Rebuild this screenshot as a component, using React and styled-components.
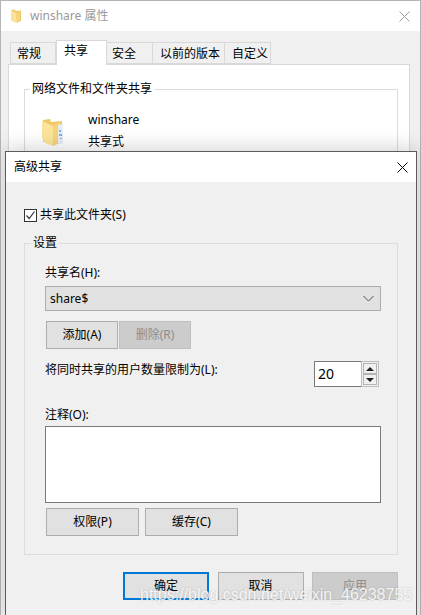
import React from "react";
import styled, { createGlobalStyle } from "styled-components";

const Global = createGlobalStyle`
  html, body { margin: 0; padding: 0; background: #f0f0f0; }
  * { box-sizing: border-box; }
`;

const font = `"Noto Sans", "Noto Sans CJK SC", sans-serif`;

const Desktop = styled.div`
  position: relative;
  width: 421px;
  height: 615px;
  overflow: hidden;
  background: #f0f0f0;
  font-family: ${font};
  font-size: 12px;
  color: #000;
`;

const BackWindow = styled.div`
  width: 421px;
  height: 615px;
  border: 1px solid #b5b5b5;
  border-bottom: 0;
  background: #f0f0f0;
  display: flex;
  flex-direction: column;
`;

const TitleBar = styled.div`
  display: flex;
  align-items: center;
  height: ${(p) => p.$h}px;
  flex: none;
  padding: 0 ${(p) => p.$pr}px 0 ${(p) => p.$pl}px;
  background: #fff;
  gap: ${(p) => p.$gap || 6}px;
  color: ${(p) => (p.$dim ? "#9a9a9a" : "#000")};
`;

const TitleText = styled.span`
  flex: 1;
  line-height: 16px;
`;

const TabStrip = styled.div`
  display: flex;
  align-items: flex-end;
  height: 33px;
  padding: 0 0 0 9px;
  flex: none;
`;

const Tab = styled.div`
  width: ${(p) => p.$w}px;
  height: ${(p) => (p.$active ? 25 : 22)}px;
  margin-bottom: ${(p) => (p.$active ? -1 : 0)}px;
  border: 1px solid #d9d9d9;
  border-bottom: ${(p) => (p.$active ? "0" : "1px solid #d9d9d9")};
  border-left-width: ${(p) => (p.$first || p.$active ? 1 : 0)}px;
  background: ${(p) => (p.$active ? "#fff" : "#f0f0f0")};
  display: flex;
  align-items: center;
  line-height: 16px;
  position: relative;
  z-index: ${(p) => (p.$active ? 1 : 0)};
  padding: ${(p) => (p.$active ? "0 0 4px 7px" : `1px 0 0 ${p.$pl}px`)};
`;

const TabPanel = styled.div`
  margin: 0 10px 0 7px;
  flex: 1;
  background: #fff;
  border: 1px solid #d9d9d9;
  padding: 16px 11px 0 15px;
`;

const Group = styled.fieldset`
  margin: 0;
  padding: 0;
  height: ${(p) => p.$h}px;
  border: 1px solid #dcdcdc;
  min-width: 0;
`;

const GroupInner = styled.div`
  padding: ${(p) => p.$pad};
`;

const Legend = styled.legend`
  padding: 0 2px;
  margin-left: ${(p) => p.$ml}px;
  line-height: 16px;
  font-size: 12px;
`;

const ShareRow = styled.div`
  display: flex;
  gap: 24px;
`;

const FolderSlot = styled.div`
  padding-top: 6px;
  flex: none;
`;

const FileMeta = styled.div`
  display: flex;
  flex-direction: column;
  gap: 6px;
  line-height: 16px;
`;

const Dialog = styled.div`
  position: absolute;
  left: 5px;
  top: 151px;
  width: 412px;
  height: 470px;
  background: #f0f0f0;
  border: 1px solid #5b5b5b;
  box-shadow: 0 -4px 18px rgba(0, 0, 0, 0.16);
  display: flex;
  flex-direction: column;
`;

const DialogBody = styled.div`
  padding: 26px 18px 0 18px;
  display: flex;
  flex-direction: column;
`;

const CheckRow = styled.label`
  display: flex;
  align-items: center;
  gap: 3px;
  height: 14px;
  margin-bottom: 13px;
  line-height: 14px;
`;

const CheckBox = styled.span`
  width: 13px;
  height: 13px;
  border: 1px solid #333;
  background: #fff;
  display: flex;
  align-items: center;
  justify-content: center;
`;

const FieldLabel = styled.div`
  height: ${(p) => p.$h}px;
  line-height: 16px;
`;

const Select = styled.div`
  width: 336px;
  height: 25px;
  background: #e1e1e1;
  border: 1px solid #adadad;
  display: flex;
  align-items: center;
  justify-content: space-between;
  padding: 0 6px 0 4px;
  margin-bottom: 10px;
`;

const ButtonRow = styled.div`
  display: flex;
  gap: ${(p) => p.$gap}px;
  padding-left: ${(p) => p.$pl || 0}px;
  justify-content: ${(p) => (p.$end ? "flex-end" : "flex-start")};
`;

const Button = styled.div`
  width: ${(p) => p.$w}px;
  height: 28px;
  display: flex;
  align-items: center;
  justify-content: center;
  line-height: 16px;
  background: ${(p) => (p.$disabled ? "#cccccc" : "#e1e1e1")};
  color: ${(p) => (p.$disabled ? "#8c8c8c" : "#000")};
  border: ${(p) => (p.$primary ? "2px solid #0078d7" : p.$disabled ? "1px solid #bfbfbf" : "1px solid #adadad")};
`;

const LimitRow = styled.div`
  display: flex;
  justify-content: space-between;
  align-items: flex-start;
  margin-top: 12px;
  margin-bottom: 20px;
  padding-right: 2px;
`;

const LimitLabel = styled.div`
  line-height: 16px;
  margin-top: 1px;
`;

const Spin = styled.div`
  width: 65px;
  height: 26px;
  display: flex;
`;

const SpinInput = styled.div`
  width: 47px;
  height: 26px;
  background: #fff;
  border: 1px solid #7a7a7a;
  border-right: 0;
  font-size: 14px;
  line-height: 24px;
  padding-left: 3px;
`;

const SpinButtons = styled.div`
  width: 18px;
  height: 26px;
  border: 1px solid #bdbdbd;
  background: #f0f0f0;
  padding: 1px;
  display: flex;
  flex-direction: column;
`;

const SpinButton = styled.div`
  flex: 1;
  background: #f0f0f0;
  border: 1px solid #b5b5b5;
  display: flex;
  align-items: center;
  justify-content: center;
`;

const Arrow = styled.span`
  width: 0;
  height: 0;
  border-left: 4px solid transparent;
  border-right: 4px solid transparent;
  ${(p) => (p.$up ? "border-bottom: 4px solid #222;" : "border-top: 4px solid #222;")}
`;

const Comment = styled.div`
  width: 336px;
  height: 77px;
  background: #fff;
  border: 1px solid #7a7a7a;
  margin-bottom: 5px;
`;

const Footer = styled.div`
  margin-top: 17px;
`;

const Watermark = styled.div`
  position: absolute;
  left: 140px;
  top: 584px;
  font-family: "Liberation Sans", sans-serif;
  font-size: 16px;
  line-height: 22px;
  white-space: nowrap;
  color: rgba(255, 255, 255, 0.85);
  text-shadow: 0 0 2px rgba(140, 140, 140, 0.55);
  pointer-events: none;
`;

const Folder = ({ w, h, detail }) => (
  <svg width={w} height={h} viewBox="0 0 22 28" style={{ flex: "none", display: "block" }}>
    <path d="M1 2 L8 1 L9 4 L20 3 L20 24 L9 24 L1 24 Z" fill="#eec866" />
    <path d="M0 3 L11 8 L11 28 L3 25 L0 20 Z" fill="#fbe49a" />
    <path d="M11 8 L18 4 L18 25 L11 28 Z" fill="#f4d47a" />
    {detail && <path d="M16 7 L21 6 L21 26 L16 26 Z" fill="#e8eef4" />}
    {detail && <path d="M17 12 h2 v2 h-2 z M17 16 h3 v2 h-3 z M18 20 h2 v1 h-2 z" fill="#7fb0d8" />}
  </svg>
);

const CloseIcon = ({ color, size = 11 }) => (
  <svg width={size} height={size} viewBox="0 0 11 11" style={{ display: "block", flex: "none" }}>
    <path d="M0.5 0.5 L10.5 10.5 M10.5 0.5 L0.5 10.5" stroke={color} strokeWidth="1" fill="none" />
  </svg>
);

export default function App() {
  return (
    <>
      <Global />
      <Desktop>
        <BackWindow>
          <TitleBar $h={30} $pl={10} $pr={10} $dim $gap={8}>
            <Folder w={11} h={14} />
            <TitleText>winshare 属性</TitleText>
            <CloseIcon color="#9a9a9a" />
          </TitleBar>
          <TabStrip>
            <Tab $w={46} $first $pl={6}>常规</Tab>
            <Tab $w={51} $active>共享</Tab>
            <Tab $w={46} $pl={5}>安全</Tab>
            <Tab $w={72} $pl={7}>以前的版本</Tab>
            <Tab $w={46} $pl={7}>自定义</Tab>
          </TabStrip>
          <TabPanel>
            <Group $h={100}>
              <Legend $ml={5}>网络文件和文件夹共享</Legend>
              <GroupInner $pad="15px 0 0 17px">
                <ShareRow>
                  <FolderSlot>
                    <Folder w={22} h={28} detail />
                  </FolderSlot>
                  <FileMeta>
                    <span>winshare</span>
                    <span>共享式</span>
                  </FileMeta>
                </ShareRow>
              </GroupInner>
            </Group>
          </TabPanel>
        </BackWindow>
        <Dialog>
          <TitleBar $h={30} $pl={8} $pr={8}>
            <TitleText>高级共享</TitleText>
            <CloseIcon color="#000" />
          </TitleBar>
          <DialogBody>
            <CheckRow>
              <CheckBox>
                <svg width="11" height="11" viewBox="0 0 11 11">
                  <path d="M1.5 5.5 L4.2 8.5 L9.5 1.5" stroke="#333" strokeWidth="1.2" fill="none" />
                </svg>
              </CheckBox>
              共享此文件夹(S)
            </CheckRow>
            <Group $h={320}>
              <Legend $ml={6}>设置</Legend>
              <GroupInner $pad="14px 16px 0 20px">
                <FieldLabel $h={21}>共享名(H):</FieldLabel>
                <Select>
                  <span>share$</span>
                  <svg width="11" height="7" viewBox="0 0 11 7">
                    <path d="M0.5 1 L5.5 6 L10.5 1" stroke="#555" strokeWidth="1" fill="none" />
                  </svg>
                </Select>
                <ButtonRow $gap={1} $pl={1}>
                  <Button $w={72}>添加(A)</Button>
                  <Button $w={72} $disabled>删除(R)</Button>
                </ButtonRow>
                <LimitRow>
                  <LimitLabel>将同时共享的用户数量限制为(L):</LimitLabel>
                  <Spin>
                    <SpinInput>20</SpinInput>
                    <SpinButtons>
                      <SpinButton><Arrow $up /></SpinButton>
                      <SpinButton><Arrow /></SpinButton>
                    </SpinButtons>
                  </Spin>
                </LimitRow>
                <FieldLabel $h={19}>注释(O):</FieldLabel>
                <Comment />
                <ButtonRow $gap={6} $pl={1}>
                  <Button $w={93}>权限(P)</Button>
                  <Button $w={93}>缓存(C)</Button>
                </ButtonRow>
              </GroupInner>
            </Group>
            <Footer>
              <ButtonRow $gap={8.5} $end>
                <Button $w={86} $primary>确定</Button>
                <Button $w={86}>取消</Button>
                <Button $w={86} $disabled>应用</Button>
              </ButtonRow>
            </Footer>
          </DialogBody>
        </Dialog>
        <Watermark>https://blog.csdn.net/weixin_46238755</Watermark>
      </Desktop>
    </>
  );
}
